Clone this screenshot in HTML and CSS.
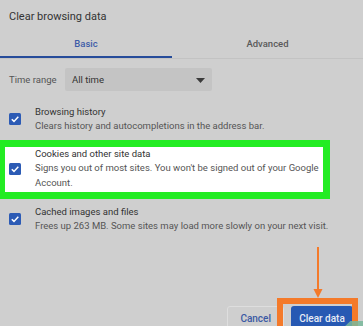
FILE: index.html
```html
<!DOCTYPE html>
<html>
<head>
<meta charset="utf-8">
<link rel="stylesheet" href="styles.css">
</head>
<body>
<div class="dialog">
  <div class="title">Clear browsing data</div>
  <div class="tabs">
    <div class="tab active">Basic</div>
    <div class="tab">Advanced</div>
  </div>
  <div class="range">
    <span class="range-label">Time range</span>
    <div class="select">
      <span>All time</span>
      <svg class="caret" width="9" height="5" viewBox="0 0 9 5"><path d="M0 0h9L4.5 5z" fill="#3a3a3a"/></svg>
    </div>
  </div>
  <div class="items">
    <div class="item">
      <svg class="cb" width="12" height="12" viewBox="0 0 12 12"><rect width="12" height="12" rx="1.5" fill="#2c5bb5"/><path d="M2.8 6.2l2.2 2.2 4.3-4.6" fill="none" stroke="#fff" stroke-width="1.5"/></svg>
      <div class="text">
        <div class="name">Browsing history</div>
        <div class="desc">Clears history and autocompletions in the address bar.</div>
      </div>
    </div>
    <div class="item highlight">
      <svg class="cb" width="12" height="12" viewBox="0 0 12 12"><rect width="12" height="12" rx="1.5" fill="#2c5bb5"/><path d="M2.8 6.2l2.2 2.2 4.3-4.6" fill="none" stroke="#fff" stroke-width="1.5"/></svg>
      <div class="text">
        <div class="name">Cookies and other site data</div>
        <div class="desc">Signs you out of most sites. You won't be signed out of your Google Account.</div>
      </div>
    </div>
    <div class="item">
      <svg class="cb" width="12" height="12" viewBox="0 0 12 12"><rect width="12" height="12" rx="1.5" fill="#2c5bb5"/><path d="M2.8 6.2l2.2 2.2 4.3-4.6" fill="none" stroke="#fff" stroke-width="1.5"/></svg>
      <div class="text">
        <div class="name">Cached images and files</div>
        <div class="desc">Frees up 263 MB. Some sites may load more slowly on your next visit.</div>
      </div>
    </div>
  </div>
  <div class="actions">
    <button class="btn cancel">Cancel</button>
    <button class="btn primary">Clear data</button>
  </div>
</div>
<div class="arrow">
  <svg width="12" height="52" viewBox="0 0 12 52"><path d="M6 0v44" stroke="#f47a2a" stroke-width="2"/><path d="M1.5 42h9L6 51z" fill="#f47a2a"/></svg>
</div>
<div class="orange-box"></div>
<div class="cursor-blob"></div>
</body>
</html>
```
FILE: styles.css
```css
* { box-sizing: border-box; }
html, body { margin: 0; padding: 0; }
body {
  width: 363px;
  height: 326px;
  overflow: hidden;
  background: #cfcfcf;
  font-family: Roboto, "Liberation Sans", sans-serif;
  color: #333;
  position: relative;
}
.title {
  height: 33px;
  padding: 9px 9px 0;
  font-size: 11px;
  line-height: 16px;
  color: #333;
}
.tabs {
  display: grid;
  grid-template-columns: 172px 1fr;
  height: 26px;
  border-bottom: 1px solid #c3c3c3;
}
.tab {
  height: 25px;
  padding-top: 4px;
  text-align: center;
  font-size: 9.5px;
  line-height: 14px;
  color: #5a5a5a;
  font-weight: 500;
}
.tab.active {
  color: #3d5ca8;
  border-bottom: 2px solid #264c9a;
}
.range {
  display: flex;
  align-items: center;
  padding: 9px 0 0 9px;
}
.range-label {
  font-size: 9.5px;
  color: #555;
  width: 56px;
}
.select {
  width: 147px;
  height: 23px;
  background: #c4c4c4;
  border-radius: 2px;
  display: flex;
  align-items: center;
  justify-content: space-between;
  padding: 0 7px 0 7px;
  font-size: 9.5px;
  color: #333;
}
.caret { margin-top: 1px; }
.items {
  display: flex;
  flex-direction: column;
  gap: 13px;
  margin-top: 13.75px;
}
.item {
  display: flex;
  align-items: center;
  gap: 14px;
  padding-left: 9px;
  font-size: 9.5px;
  line-height: 14.5px;
}
.item .cb { flex: none; }
.item.highlight {
  margin: 0 40px 0 5px;
  padding: 0 0 1.5px 4px;
  background: #fff;
  box-shadow: 0 0 0 7px #23ec23;
}
.name { color: #333; }
.desc { color: #555; }
.actions {
  display: flex;
  justify-content: flex-end;
  gap: 7px;
  padding-right: 10px;
  margin-top: 72px;
}
.btn {
  font-family: Roboto, "Liberation Sans", sans-serif;
  font-size: 10px;
  font-weight: 500;
  height: 25px;
  border-radius: 3px;
  padding: 0 12px;
}
.cancel {
  background: #cfcfcf;
  border: 1px solid #dedede;
  color: #3b5aa4;
}
.primary {
  width: 62px;
  background: #2759b3;
  border: none;
  color: #e8ecf5;
  padding: 0;
}
.arrow {
  position: absolute;
  left: 312px;
  top: 247px;
  line-height: 0;
}
.orange-box {
  position: absolute;
  left: 277px;
  top: 298px;
  width: 81px;
  height: 40px;
  border: 6px solid #f47a2a;
}
.cursor-blob {
  position: absolute;
  left: 340px;
  top: 321px;
  width: 26px;
  height: 10px;
  background: #79b89b;
  clip-path: polygon(40% 0, 100% 0, 100% 100%, 0 100%);
  opacity: 0.85;
}
```
